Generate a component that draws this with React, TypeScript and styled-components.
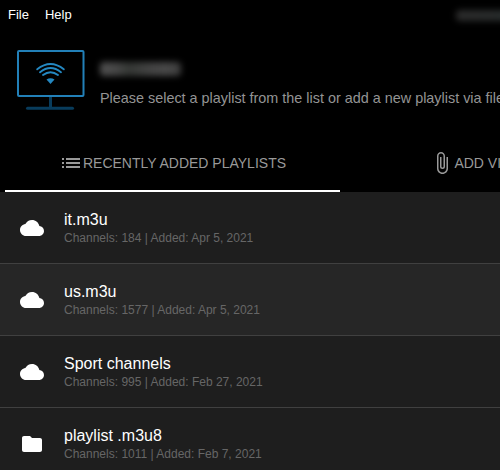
import React from 'react';
import styled, { createGlobalStyle } from 'styled-components';

const GlobalStyle = createGlobalStyle`
  * { box-sizing: border-box; }
  body {
    margin: 0;
    background: #000;
    overflow: hidden;
    font-family: "Liberation Sans", Arial, sans-serif;
  }
`;

const Window = styled.div`
  width: 500px;
  height: 470px;
  overflow: hidden;
  background: #000;
  display: flex;
  flex-direction: column;
`;

const MenuBar = styled.nav`
  display: flex;
  align-items: center;
  flex: none;
  height: 30px;
  padding: 0 0 2px 8px;
  gap: 16px;
  color: #fff;
  font-size: 13px;
`;

const Redacted = styled.div<{ $width: number; $height: number; $fill: string }>`
  width: ${(p) => p.$width}px;
  height: ${(p) => p.$height}px;
  flex: none;
  border-radius: 4px;
  background: ${(p) => p.$fill};
  filter: blur(3px);
`;

const WindowTitle = styled.div`
  flex: none;
  margin-left: auto;
  padding-top: 2px;
  width: 44px;
`;

const Header = styled.header`
  display: flex;
  flex: none;
  height: 104px;
  padding: 18px 0 0 16px;
`;

const Logo = styled.svg`
  flex: none;
  width: 70px;
  height: 64px;
`;

const Intro = styled.div`
  padding: 14px 0 0 14px;
  flex: none;
`;

const Hint = styled.p`
  margin: 13px 0 0;
  font-size: 14.4px;
  line-height: 18px;
  white-space: nowrap;
  color: #949494;
`;

const Tabs = styled.div`
  display: flex;
  flex: none;
  height: 58px;
  padding-left: 5px;
`;

const Tab = styled.div<{ $active?: boolean; $inset?: number }>`
  display: flex;
  align-items: center;
  justify-content: center;
  flex: none;
  width: 335px;
  height: 58px;
  padding-left: ${(p) => p.$inset ?? 0}px;
  border-top: 2px solid transparent;
  border-bottom: 2px solid ${(p) => (p.$active ? '#fff' : 'transparent')};
  color: #999;
  font-size: 14px;
  white-space: nowrap;
`;

const Glyph = styled.svg`
  width: 24px;
  height: 24px;
  flex: none;
  fill: currentColor;
`;

const List = styled.main`
  flex: 1;
  min-height: 0;
  background: #1e1e1e;
`;

const Row = styled.div<{ $hover?: boolean }>`
  display: flex;
  align-items: center;
  height: 72px;
  padding-left: 20px;
  gap: 20px;
  border-bottom: 1px solid #404040;
  background: ${(p) => (p.$hover ? '#262626' : '#1e1e1e')};
  color: #fff;
`;

const Details = styled.div`
  padding-top: 2px;
`;

const Name = styled.div`
  font-size: 16px;
  line-height: 20px;
`;

const Meta = styled.div`
  font-size: 12px;
  line-height: 17px;
  color: #666;
`;

const paths = {
  list: 'M3 13h2v-2H3v2zm0 4h2v-2H3v2zm0-8h2V7H3v2zm4 4h14v-2H7v2zm0 4h14v-2H7v2zM7 7v2h14V7H7z',
  attach:
    'M16.5 6v11.5c0 2.21-1.79 4-4 4s-4-1.79-4-4V5a2.5 2.5 0 0 1 5 0v10.5c0 .55-.45 1-1 1s-1-.45-1-1V6H10v9.5a2.5 2.5 0 0 0 5 0V5c0-2.21-1.79-4-4-4S7 2.79 7 5v12.5c0 3.04 2.46 5.5 5.5 5.5s5.5-2.46 5.5-5.5V6h-1.5z',
  cloud:
    'M19.35 10.04C18.67 6.59 15.64 4 12 4 9.11 4 6.6 5.64 5.35 8.04 2.34 8.36 0 10.91 0 14c0 3.31 2.69 6 6 6h13c2.76 0 5-2.24 5-5 0-2.64-2.05-4.78-4.65-4.96z',
  folder:
    'M10 4H4c-1.1 0-1.99.9-1.99 2L2 18c0 1.1.9 2 2 2h16c1.1 0 2-.9 2-2V8c0-1.1-.9-2-2-2h-8l-2-2z',
};

const Icon = ({ name }: { name: keyof typeof paths }) => (
  <Glyph viewBox="0 0 24 24" aria-hidden="true">
    <path d={paths[name]} />
  </Glyph>
);

type Playlist = {
  name: string;
  channels: number;
  added: string;
  icon: 'cloud' | 'folder';
  hover?: boolean;
};

const playlists: Playlist[] = [
  { name: 'it.m3u', channels: 184, added: 'Apr 5, 2021', icon: 'cloud' },
  { name: 'us.m3u', channels: 1577, added: 'Apr 5, 2021', icon: 'cloud', hover: true },
  { name: 'Sport channels', channels: 995, added: 'Feb 27, 2021', icon: 'cloud' },
  { name: 'playlist .m3u8', channels: 1011, added: 'Feb 7, 2021', icon: 'folder' },
];

export default function App() {
  return (
    <Window>
      <GlobalStyle />
      <MenuBar>
        <span>File</span>
        <span>Help</span>
        <WindowTitle>
          <Redacted $width={60} $height={11} $fill="linear-gradient(90deg, #2b2b2b, #272c2c)" />
        </WindowTitle>
      </MenuBar>
      <Header>
        <Logo viewBox="0 0 70 64" fill="none">
          <path d="M34.5 48v12" stroke="#083c5c" strokeWidth="3" />
          <path d="M11.5 60.3h45" stroke="#083c5c" strokeWidth="3" strokeLinecap="round" />
          <rect x="2" y="3" width="65.5" height="45" rx="1" stroke="#2280b8" strokeWidth="2" />
          <g stroke="#2488c2" strokeWidth="1.9" strokeLinecap="round">
            <path d="M21.2 21.3Q34.5 10.7 47.8 21.3" />
            <path d="M24 24.2Q34.5 16 45 24.2" />
            <path d="M27 27Q34.5 21.4 42 27" />
          </g>
          <path d="M30.5 31.5Q34.5 28.8 38.5 31.5L34.5 36z" fill="#2488c2" />
        </Logo>
        <Intro>
          <Redacted
            $width={81}
            $height={14}
            $fill="linear-gradient(90deg, #505050 0%, #464646 20%, #343734 36%, #424242 60%, #484848 82%, #3c3c3c 100%)"
          />
          <Hint>Please select a playlist from the list or add a new playlist via file upload</Hint>
        </Intro>
      </Header>
      <Tabs>
        <Tab $active>
          <Icon name="list" />
          RECENTLY ADDED PLAYLISTS
        </Tab>
        <Tab $inset={20}>
          <Icon name="attach" />
          ADD VIA FILE UPLOAD
        </Tab>
      </Tabs>
      <List>
        {playlists.map((p) => (
          <Row key={p.name} $hover={p.hover}>
            <Icon name={p.icon} />
            <Details>
              <Name>{p.name}</Name>
              <Meta>
                Channels: {p.channels} | Added: {p.added}
              </Meta>
            </Details>
          </Row>
        ))}
      </List>
    </Window>
  );
}
